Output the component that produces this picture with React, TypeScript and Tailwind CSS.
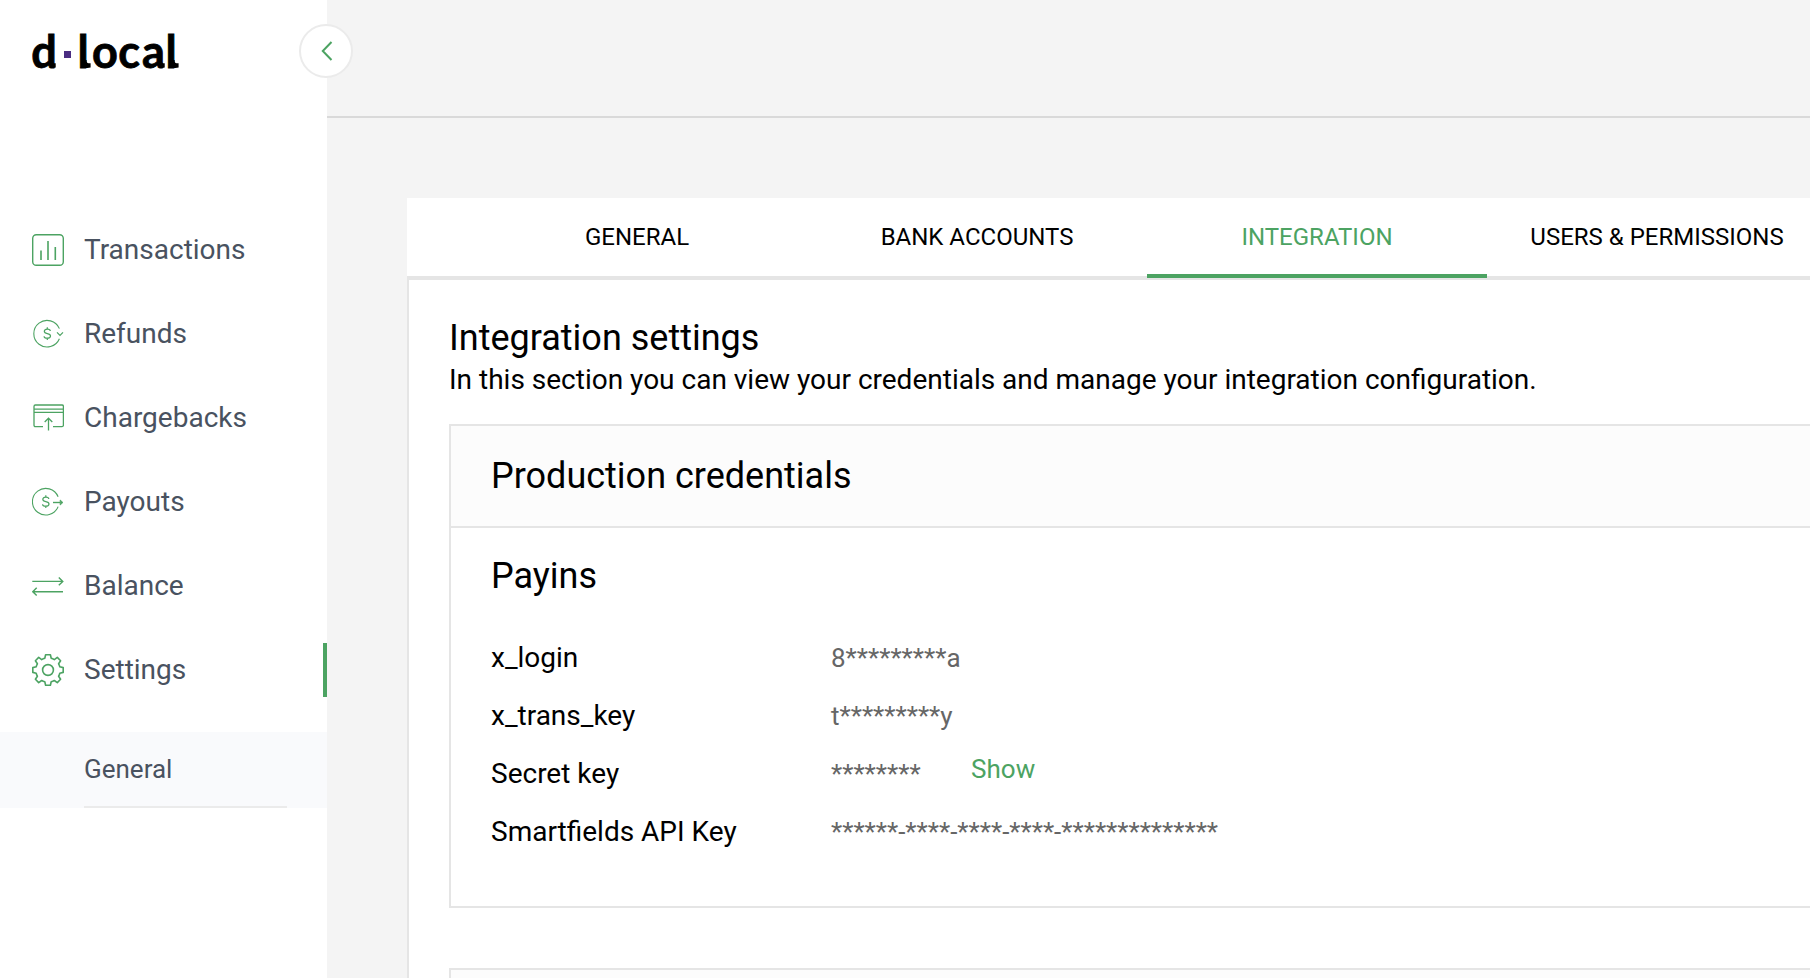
import React from 'react';

const GREEN = '#4ca362';

function Dollar({ x }: { x: number }) {
  return (
    <g transform={`translate(${x} 0)`} strokeWidth="1.2">
      <path d="M3 -2.6C3 -4 1.8 -4.6 0 -4.6C-1.9 -4.6 -3 -3.9 -3 -2.4C-3 -0.7 -1.6 -0.3 0 0C1.7 0.3 3.2 0.8 3.2 2.4C3.2 3.9 1.9 4.5 0 4.5C-1.9 4.5 -3.2 4 -3.2 2.5" />
      <path d="M0 -6.5V-4.6M0 4.5V6.4" />
    </g>
  );
}

function Icon({ children }: { children: React.ReactNode }) {
  return (
    <svg width="32" height="32" viewBox="0 0 32 32" fill="none" stroke={GREEN} strokeWidth="1.3" className="shrink-0">
      {children}
    </svg>
  );
}

const icons: Record<string, React.ReactNode> = {
  Transactions: (
    <Icon>
      <rect x="0.7" y="0.7" width="30.6" height="30.6" rx="3.6" strokeWidth="1.4" />
      <path d="M9 16.5V26M16 7V26M23.3 13V26" strokeWidth="1.6" />
    </Icon>
  ),
  Refunds: (
    <Icon>
      <path d="M27.4 10.6A13.3 13.3 0 1 0 27.4 20.8" strokeWidth="1.1" />
      <g transform="translate(0 15.7)"><Dollar x={15.3} /></g>
      <path d="M25 14.3L28 17.3L31 14.3" strokeWidth="1.2" />
    </Icon>
  ),
  Chargebacks: (
    <Icon>
      <path d="M11 24.6H3.4Q2 24.6 2 23.2V4.4Q2 3 3.4 3H30Q31.4 3 31.4 4.4V23.2Q31.4 24.6 30 24.6H21M2 7.2H31.4M2 10.4H31.4" />
      <path d="M16.5 28.5V16.5M12.7 20L16.5 16.2L20.3 20" />
    </Icon>
  ),
  Payouts: (
    <Icon>
      <path d="M26.1 10.8A13.3 13.3 0 1 0 26.1 20.6" strokeWidth="1.1" />
      <g transform="translate(0 15.7)"><Dollar x={13.8} /></g>
      <path d="M21 16.5H28" strokeWidth="1.4" />
      <path d="M28.2 14L30.9 16.5L28.2 19Z" fill={GREEN} strokeWidth="0.8" />
    </Icon>
  ),
  Balance: (
    <Icon>
      <path d="M0.3 11.4H30.6M26.8 7.4L30.8 11.4L26.8 15.2M31 21.7H0.8M4.7 17.8L0.8 21.7L4.7 25.6" strokeWidth="1.4" />
    </Icon>
  ),
  Settings: (
    <Icon>
      <circle cx="16" cy="16" r="5.4" strokeWidth="1.6" />
      <path
        strokeWidth="1.6"
        strokeLinejoin="round"
        d="M13.6 0.8H18.4L19.2 4.3Q20.8 4.8 22.3 5.6L25.3 3.4L28.6 6.7L26.6 9.8Q27.4 11.2 27.8 12.8L31.2 13.6V18.4L27.8 19.2Q27.4 20.8 26.6 22.2L28.6 25.3L25.3 28.6L22.3 26.5Q20.8 27.3 19.2 27.7L18.4 31.2H13.6L12.8 27.7Q11.2 27.3 9.7 26.5L6.7 28.6L3.4 25.3L5.4 22.2Q4.6 20.8 4.2 19.2L0.8 18.4V13.6L4.2 12.8Q4.6 11.2 5.4 9.8L3.4 6.7L6.7 3.4L9.7 5.6Q11.2 4.8 12.8 4.3Z"
      />
    </Icon>
  ),
};

const navItems = ['Transactions', 'Refunds', 'Chargebacks', 'Payouts', 'Balance', 'Settings'];
const tabs = ['GENERAL', 'BANK ACCOUNTS', 'INTEGRATION', 'USERS & PERMISSIONS'];
const credentials = [
  { label: 'x_login', value: '8*********a' },
  { label: 'x_trans_key', value: 't*********y' },
  { label: 'Secret key', value: '********', action: 'Show' },
  { label: 'Smartfields API Key', value: '******-****-****-****-**************' },
];

function Tail({ className }: { className: string }) {
  return (
    <svg viewBox="0 0 7 8" preserveAspectRatio="none" className={className}>
      <path d="M0 0H2.6C2.6 2.4 3.2 3.2 4.6 3.2H6.6V7.6C5.8 7.9 4.6 8 3.4 8H0Z" fill="#000" />
    </svg>
  );
}

function Logo() {
  return (
    <div className="flex h-[54px] items-start pl-[32px] font-['Lato',sans-serif] text-[45px] font-bold leading-[55px] text-black [-webkit-text-stroke:0.8px_#000]">
      <span className="relative flex w-[24px] justify-center">
        d
        <Tail className="absolute left-[19px] top-[36px] h-2 w-[5px]" />
      </span>
      <span className="ml-[8px] mr-[7px] mt-[27px] size-[7px] bg-[#4a2d82]" />
      <span className="relative flex w-[10px] justify-center">
        l
        <Tail className="absolute left-[6px] top-[36px] h-2 w-[7px]" />
      </span>
      <span className="ml-[4px] flex w-[26px] justify-center">o</span>
      <span className="flex w-[22px] justify-center">c</span>
      <span className="relative ml-px flex w-[25px] justify-center">
        a
        <Tail className="absolute left-[19px] top-[36px] h-2 w-[5px]" />
      </span>
      <span className="relative flex w-[10px] justify-center">
        l
        <Tail className="absolute left-[6px] top-[36px] h-2 w-[7px]" />
      </span>
    </div>
  );
}

function Sidebar() {
  return (
    <aside className="relative h-full w-[327px] shrink-0 bg-white pt-6">
      <Logo />
      <button className="absolute left-[299px] top-6 flex size-[54px] items-center justify-center rounded-full border-2 border-[#ebebeb] bg-white">
        <svg width="12" height="20" viewBox="0 0 12 20" fill="none" stroke={GREEN} strokeWidth="2" className="ml-0.5">
          <path d="M10.5 1L1.8 10L10.5 19" />
        </svg>
      </button>
      <nav className="mt-[145px]">
        {navItems.map((item) => (
          <div
            key={item}
            className={
              item === 'Settings'
                ? 'mb-[30px] flex h-[54px] items-center gap-5 border-r-4 border-[#4ca362] pl-8'
                : 'mb-[30px] flex h-[54px] items-center gap-5 pl-8'
            }
          >
            {icons[item]}
            <span className="pb-px text-[28px] leading-8 text-[#495260]">{item}</span>
          </div>
        ))}
      </nav>
      <div className="mt-[35px] h-[76px] bg-[#f9fafc] pl-[84px] pr-10">
        <div className="h-full border-b-2 border-[#ebebeb] pt-[21px] text-[26px] leading-8 text-[#495260]">General</div>
      </div>
    </aside>
  );
}

export default function App() {
  return (
    <div className="flex h-[978px] w-full overflow-hidden bg-[#f4f4f4] font-['Roboto',sans-serif] text-black">
      <Sidebar />
      <main className="flex min-w-0 flex-1 flex-col">
        <header className="h-[118px] shrink-0 border-b-2 border-[#d9d9d9]" />
        <section className="ml-20 mt-20 flex-1">
          <div className="flex h-[82px] w-[1480px] border-b-4 border-[#e5e5e5] bg-white pl-[60px]">
            {tabs.map((tab) => (
              <div
                key={tab}
                className={
                  tab === 'INTEGRATION'
                    ? 'h-20 w-[340px] shrink-0 border-b-4 border-[#4ca362] pt-[23px] text-center text-[24px] leading-8 text-[#4ca362]'
                    : 'h-20 w-[340px] shrink-0 pt-[23px] text-center text-[24px] leading-8'
                }
              >
                {tab}
              </div>
            ))}
          </div>
          <div className="h-[698px] w-[1480px] border-l-2 border-[#e5e5e5] bg-white pl-10 pt-[34px]">
            <h1 className="text-[36px] leading-[48px]">Integration settings</h1>
            <p className="text-[28px] leading-[35px]">In this section you can view your credentials and manage your integration configuration.</p>
            <div className="mt-[27px] h-[484px] border-2 border-[#e5e5e5]">
              <div className="h-[102px] border-b-2 border-[#e5e5e5] bg-[#fcfcfc] pl-10 pt-[26px] text-[36px] leading-[48px]">
                Production credentials
              </div>
              <div className="pl-10 pt-6">
                <h2 className="text-[36px] leading-[48px]">Payins</h2>
                <div className="mt-[29px]">
                  {credentials.map((row) => (
                    <div key={row.label} className="flex h-[58px] items-baseline pt-3">
                      <span className="w-[340px] text-[28px] leading-[33px]">{row.label}</span>
                      <span className="text-[26px] leading-8 text-[#666]">{row.value}</span>
                      {row.action && (
                        <button className="ml-[50.5px] self-start text-[26px] leading-6 text-[#4ca362]">{row.action}</button>
                      )}
                    </div>
                  ))}
                </div>
              </div>
            </div>
            <div className="mt-[60px] h-[104px] border-2 border-[#e5e5e5] bg-[#fcfcfc]" />
          </div>
        </section>
      </main>
    </div>
  );
}
